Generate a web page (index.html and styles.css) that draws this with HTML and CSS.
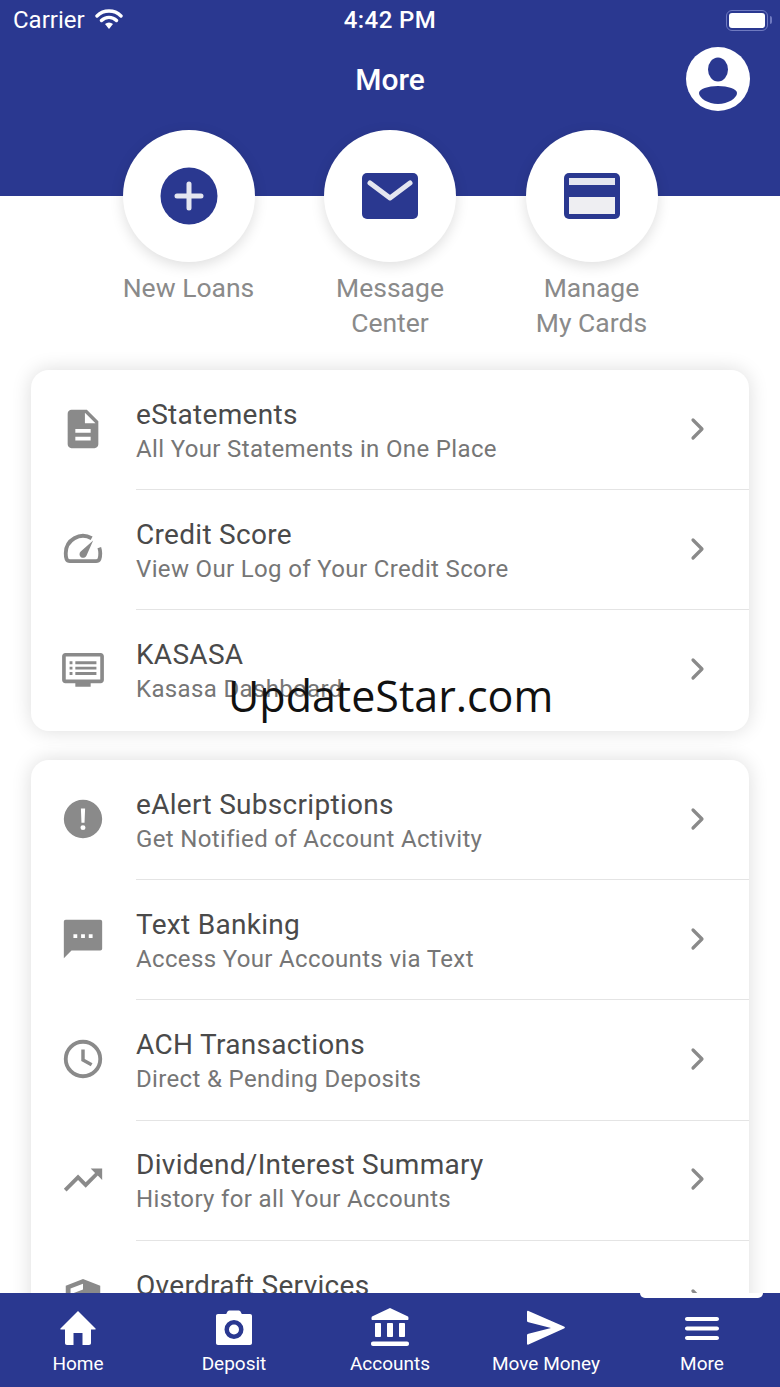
FILE: index.html
```html
<!DOCTYPE html>
<html lang="en">
<head>
    <meta charset="UTF-8">
    <meta name="viewport" content="width=device-width, initial-scale=1.0">
    <title>More</title>
    <link rel="stylesheet" href="styles.css">
</head>
<body>
    <div class="screen">
        <div class="content">
            <header class="top-bar">
                <div class="status-bar">
                    <div class="status-left">
                        <span>Carrier</span>
                        <svg class="wifi" viewBox="0 0 28 22">
                            <path d="M2 8a17 17 0 0 1 24 0M6.500 12.500a10.500 10.500 0 0 1 15 0" fill="none" stroke="#fff" stroke-width="3.400" stroke-linecap="round"/>
                            <path d="M10 16a6 6 0 0 1 8 0l-4 5z" fill="#fff"/>
                        </svg>
                    </div>
                    <span class="status-time">4:42 PM</span>
                    <div class="battery"><div class="battery-fill"></div></div>
                </div>
                <div class="title-row">
                    <h1>More</h1>
                    <svg class="profile" viewBox="0 0 64 64">
                        <circle cx="32" cy="32" r="32" fill="#fff"/>
                        <ellipse cx="32" cy="22.500" rx="10" ry="12" fill="#2a3890"/>
                        <path d="M32 39c10 0 19 3 19 7 0 5-9 11-19 11s-19-6-19-11c0-4 9-7 19-7z" fill="#2a3890"/>
                    </svg>
                </div>
            </header>

            <section class="actions">
                <div class="action">
                    <div class="action-circle">
                        <svg class="action-icon" viewBox="0 0 58 58">
                            <circle cx="29" cy="29" r="28.500" fill="#2a3890"/>
                            <path d="M29 17v24M17 29h24" stroke="#e4e6f0" stroke-width="5" stroke-linecap="round"/>
                        </svg>
                    </div>
                    <span class="action-label">New Loans</span>
                </div>
                <div class="action">
                    <div class="action-circle">
                        <svg class="action-icon" viewBox="0 0 58 50">
                            <rect x="1" y="2" width="56" height="46" rx="5" fill="#2a3890"/>
                            <path d="M9 12l20 15 20-15" fill="none" stroke="#e4e6f0" stroke-width="5" stroke-linecap="round" stroke-linejoin="round"/>
                        </svg>
                    </div>
                    <span class="action-label">Message<br>Center</span>
                </div>
                <div class="action">
                    <div class="action-circle">
                        <svg class="action-icon" viewBox="0 0 58 50">
                            <rect x="1" y="2" width="56" height="46" rx="5" fill="#2a3890"/>
                            <rect x="6" y="7" width="46" height="7" fill="#e4e6f0"/>
                            <rect x="6" y="26" width="46" height="17" fill="#eeeef2"/>
                        </svg>
                    </div>
                    <span class="action-label">Manage<br>My Cards</span>
                </div>
            </section>

            <section class="card">
                <a class="row">
                    <div class="row-icon">
                        <svg viewBox="0 0 24 24"><path d="M6 2h8l6 6v12c0 1.100-.9 2-2 2H6c-1.100 0-2-.9-2-2V4c0-1.100.9-2 2-2zm7 1.500V9h5.500L13 3.500zM8 12v2h8v-2H8zm0 4v2h8v-2H8z" fill-rule="evenodd"/></svg>
                    </div>
                    <div class="row-body">
                        <div class="row-text">
                            <div class="row-title">eStatements</div>
                            <div class="row-sub">All Your Statements in One Place</div>
                        </div>
                        <svg class="chevron" viewBox="0 0 16 24"><path d="M3 3l9 9-9 9"/></svg>
                    </div>
                </a>
                <a class="row">
                    <div class="row-icon">
                        <svg viewBox="0 0 24 24">
                            <path d="M16.500 6.400A9 9 0 0 0 3 14.200c0 1.500.1 2.300.4 3 .3.700.9 1.100 1.800 1.100h13.600c.9 0 1.500-.4 1.800-1.100.3-.7.4-1.500.4-3 0-1-.2-2-.5-2.900" fill="none" stroke="#8a8a8a" stroke-width="2"/>
                            <path d="M17.300 7.500l-3.500 8a1.900 1.900 0 1 1-3-2.200z"/>
                        </svg>
                    </div>
                    <div class="row-body">
                        <div class="row-text">
                            <div class="row-title">Credit Score</div>
                            <div class="row-sub">View Our Log of Your Credit Score</div>
                        </div>
                        <svg class="chevron" viewBox="0 0 16 24"><path d="M3 3l9 9-9 9"/></svg>
                    </div>
                </a>
                <a class="row">
                    <div class="row-icon">
                        <svg viewBox="0 0 24 24">
                            <path d="M2.800 3.600h18.400c1 0 1.700.7 1.700 1.700v12.400c0 1-.7 1.700-1.700 1.700H16v1.800H8v-1.800H2.800c-1 0-1.700-.7-1.700-1.700V5.300c0-1 .7-1.700 1.700-1.700zM3 5.500v12h18v-12H3z" fill-rule="evenodd"/>
                            <path d="M5 8h1.500v1.500H5zM8 8h11v1.500H8zM5 10.800h1.500v1.500H5zM8 10.800h11v1.500H8zM5 13.600h1.500v1.500H5zM8 13.600h11v1.500H8z"/>
                        </svg>
                    </div>
                    <div class="row-body">
                        <div class="row-text">
                            <div class="row-title">KASASA</div>
                            <div class="row-sub">Kasasa Dashboard</div>
                        </div>
                        <svg class="chevron" viewBox="0 0 16 24"><path d="M3 3l9 9-9 9"/></svg>
                    </div>
                </a>
            </section>

            <section class="card">
                <a class="row">
                    <div class="row-icon">
                        <svg viewBox="0 0 24 24"><path d="M12 2a10 10 0 1 0 0 20 10 10 0 0 0 0-20zm-1.100 4.500h2.200l-.3 7.500h-1.600l-.3-7.500zM12 15.200a1.300 1.300 0 1 1 0 2.600 1.300 1.300 0 0 1 0-2.600z" fill-rule="evenodd"/></svg>
                    </div>
                    <div class="row-body">
                        <div class="row-text">
                            <div class="row-title">eAlert Subscriptions</div>
                            <div class="row-sub">Get Notified of Account Activity</div>
                        </div>
                        <svg class="chevron" viewBox="0 0 16 24"><path d="M3 3l9 9-9 9"/></svg>
                    </div>
                </a>
                <a class="row">
                    <div class="row-icon">
                        <svg viewBox="0 0 24 24"><path d="M3 2h18c.6 0 1 .4 1 1v14c0 .6-.4 1-1 1H6l-4 4V3c0-.6.4-1 1-1zm4 7.500v2h2v-2H7zm4 0v2h2v-2h-2zm4 0v2h2v-2h-2z" fill-rule="evenodd"/></svg>
                    </div>
                    <div class="row-body">
                        <div class="row-text">
                            <div class="row-title">Text Banking</div>
                            <div class="row-sub">Access Your Accounts via Text</div>
                        </div>
                        <svg class="chevron" viewBox="0 0 16 24"><path d="M3 3l9 9-9 9"/></svg>
                    </div>
                </a>
                <a class="row">
                    <div class="row-icon">
                        <svg viewBox="0 0 24 24">
                            <circle cx="12" cy="12" r="9" fill="none" stroke="#8a8a8a" stroke-width="2"/>
                            <path d="M12 7v5.500l4.500 2.500" fill="none" stroke="#8a8a8a" stroke-width="1.800"/>
                        </svg>
                    </div>
                    <div class="row-body">
                        <div class="row-text">
                            <div class="row-title">ACH Transactions</div>
                            <div class="row-sub">Direct &amp; Pending Deposits</div>
                        </div>
                        <svg class="chevron" viewBox="0 0 16 24"><path d="M3 3l9 9-9 9"/></svg>
                    </div>
                </a>
                <a class="row">
                    <div class="row-icon">
                        <svg viewBox="0 0 24 24"><path d="M16 6l2.290 2.290-4.880 4.880-4-4L2 16.590 3.410 18l6-6 4 4 6.300-6.290L22 12V6z"/></svg>
                    </div>
                    <div class="row-body">
                        <div class="row-text">
                            <div class="row-title">Dividend/Interest Summary</div>
                            <div class="row-sub">History for all Your Accounts</div>
                        </div>
                        <svg class="chevron" viewBox="0 0 16 24"><path d="M3 3l9 9-9 9"/></svg>
                    </div>
                </a>
                <a class="row">
                    <div class="row-icon">
                        <svg viewBox="0 0 24 24"><path d="M12 1l9 3.500V12c0 5-4 9-9 10-5-1-9-5-9-10V4.500L12 1zm-6.500 5v3l6.500-2.500V3.500L5.500 6z" fill-rule="evenodd"/></svg>
                    </div>
                    <div class="row-body">
                        <div class="row-text">
                            <div class="row-title">Overdraft Services</div>
                            <div class="row-sub">&nbsp;</div>
                        </div>
                        <svg class="chevron" viewBox="0 0 16 24"><path d="M3 3l9 9-9 9"/></svg>
                    </div>
                </a>
            </section>
        </div>

        <nav class="tab-bar">
            <div class="tab-notch"></div>
            <div class="tab">
                <svg viewBox="0 0 40 36"><path d="M20 1L37.500 18.500c.4.500.1 1-.5 1H33v13.500c0 1-.7 2-2 2h-6.500V23h-9v12H9c-1.300 0-2-1-2-2V19.500H3c-.6 0-.9-.5-.5-1z"/></svg>
                <span>Home</span>
            </div>
            <div class="tab">
                <svg viewBox="0 0 40 36"><path d="M13 2.500C13.500 1 14.500.5 16 .5h8c1.500 0 2.500.5 3 2l.8 1.500H36c1.200 0 2 .8 2 2v27c0 1.200-.8 2-2 2H4c-1.200 0-2-.8-2-2V6c0-1.200.8-2 2-2h8.200zM20 10a9.500 9.500 0 1 0 0 19 9.500 9.500 0 0 0 0-19zm0 4.500a5 5 0 1 1 0 10 5 5 0 0 1 0-10z" fill-rule="evenodd"/></svg>
                <span>Deposit</span>
            </div>
            <div class="tab">
                <svg viewBox="0 0 40 40"><path d="M20 0l18 8.500c.5.300.5 2.500.5 2.500 0 .8-.5 1-1 1h-35c-.5 0-1-.2-1-1 0 0 0-2.200.5-2.500zM6 15h4c.5 0 1 .4 1 1v12c0 .6-.5 1-1 1H6c-.5 0-1-.4-1-1V16c0-.6.5-1 1-1zm12 0h4c.5 0 1 .4 1 1v12c0 .6-.5 1-1 1h-4c-.5 0-1-.4-1-1V16c0-.6.5-1 1-1zm12 0h4c.5 0 1 .4 1 1v12c0 .6-.5 1-1 1h-4c-.5 0-1-.4-1-1V16c0-.6.5-1 1-1zM3 33.500h34c1.200 0 2 .8 2 2.300s-.8 2.200-2 2.200H3c-1.200 0-2-.7-2-2.200s.8-2.300 2-2.300z"/></svg>
                <span>Accounts</span>
            </div>
            <div class="tab">
                <svg viewBox="0 0 40 36"><path d="M2.500 1L38 16.500c1.200.6 1.200 1.400 0 2L2.500 34.500C1.300 35 1 34.400 1 33.500v-8c0-1 .5-1.500 1.500-1.700L25 18 2.500 12.200C1.500 12 1 11.500 1 10.500v-8.500C1 1 1.500.6 2.500 1z"/></svg>
                <span>Move Money</span>
            </div>
            <div class="tab">
                <svg viewBox="0 0 40 36"><path d="M5 7h30c1.100 0 2 .9 2 2s-.9 2-2 2H5c-1.100 0-2-.9-2-2s.9-2 2-2zm0 9.500h30c1.100 0 2 .9 2 2s-.9 2-2 2H5c-1.100 0-2-.9-2-2s.9-2 2-2zm0 9.500h30c1.100 0 2 .9 2 2s-.9 2-2 2H5c-1.100 0-2-.9-2-2s.9-2 2-2z"/></svg>
                <span>More</span>
            </div>
        </nav>

        <div class="watermark">UpdateStar.com</div>
    </div>
</body>
</html>
```

FILE: styles.css
```css
:root {
    --blue: #2a3890;
    --icon-gray: #8a8a8a;
    --title-color: #4a4a4a;
    --sub-color: #767676;
    --line-color: #e4e4e4;
}

* {
    box-sizing: border-box;
}

body {
    margin: 0;
    background: #fff;
    font-family: Roboto, "Liberation Sans", sans-serif;
}

.screen {
    position: relative;
    width: 780px;
    height: 1387px;
    display: flex;
    flex-direction: column;
    overflow: hidden;
}

.content {
    flex: 1;
    min-height: 0;
    overflow: hidden;
}

/* header */
.top-bar {
    height: 196px;
    background: var(--blue);
    color: #fff;
}

.status-bar {
    height: 40px;
    display: flex;
    align-items: center;
    justify-content: space-between;
    padding: 0 12px 0 13px;
    font-size: 24px;
    position: relative;
}

.status-left {
    display: flex;
    align-items: center;
    gap: 10px;
}

.wifi {
    width: 28px;
    height: 22px;
    margin-bottom: 3px;
}

.status-time {
    position: absolute;
    left: 0;
    right: 0;
    text-align: center;
    font-weight: 500;
    letter-spacing: 0.4px;
}

.battery {
    position: relative;
    width: 42px;
    height: 21px;
    padding: 2px;
    border: 1.5px solid #6f7ac0;
    border-radius: 6px;
}

.battery::after {
    content: "";
    position: absolute;
    right: -5px;
    top: 5px;
    width: 2px;
    height: 8px;
    background: #6f7ac0;
    border-radius: 0 2px 2px 0;
}

.battery-fill {
    height: 100%;
    background: #fff;
    border-radius: 3px;
}

.title-row {
    height: 78px;
    padding-right: 30px;
    display: flex;
    align-items: center;
    justify-content: flex-end;
    position: relative;
}

.title-row h1 {
    position: absolute;
    left: 0;
    right: 0;
    margin: 0;
    text-align: center;
    font-size: 30px;
    font-weight: 500;
}

.profile {
    width: 64px;
    height: 64px;
}

/* quick actions */
.actions {
    margin-top: -66px;
    display: flex;
    justify-content: center;
    height: 240px;
}

.action {
    width: 201.5px;
    display: flex;
    flex-direction: column;
    align-items: center;
}

.action-circle {
    width: 132px;
    height: 132px;
    border-radius: 50%;
    background: #fff;
    box-shadow: 0 4px 14px rgba(0, 0, 0, 0.13);
    display: flex;
    align-items: center;
    justify-content: center;
}

.action-icon {
    width: 58px;
    height: 58px;
}

.action-label {
    margin-top: 8px;
    text-align: center;
    font-size: 26.5px;
    line-height: 35px;
    color: var(--icon-gray);
}

/* cards */
.card {
    margin: 0 31px 29.4px;
    background: #fff;
    border-radius: 18px;
    box-shadow: 0 0 20px rgba(0, 0, 0, 0.14);
}

.row {
    height: 120.2px;
    display: flex;
}

.row-icon {
    width: 105px;
    padding: 0 0 2px 29px;
    display: flex;
    align-items: center;
}

.row-icon svg {
    width: 46px;
    height: 46px;
    fill: var(--icon-gray);
}

.row-body {
    flex: 1;
    display: flex;
    align-items: center;
    justify-content: space-between;
    padding-right: 43px;
    border-bottom: 1px solid var(--line-color);
}

.row:last-child .row-body {
    border-bottom: none;
}

.row-text {
    margin-top: 4px;
}

.row-title {
    font-size: 28px;
    line-height: 35px;
    color: var(--title-color);
    letter-spacing: 0.3px;
}

.row-sub {
    font-size: 24px;
    line-height: 35px;
    color: var(--sub-color);
    letter-spacing: 0.35px;
}

.chevron {
    width: 16px;
    height: 24px;
    margin-bottom: 2px;
    fill: none;
    stroke: var(--icon-gray);
    stroke-width: 3.2;
    stroke-linecap: round;
    stroke-linejoin: round;
}

/* bottom tabs */
.tab-bar {
    position: relative;
    flex: none;
    height: 94px;
    background: var(--blue);
    display: flex;
}

.tab-notch {
    position: absolute;
    left: 640px;
    top: 0;
    width: 123px;
    height: 5px;
    background: #fff;
    border-radius: 0 0 5px 5px;
}

.tab {
    width: 156px;
    display: flex;
    flex-direction: column;
    align-items: center;
    color: #fff;
    font-size: 19px;
    padding-top: 15px;
}

.tab svg {
    width: 40px;
    height: 40px;
    fill: #fff;
}

.tab span {
    margin-top: 4px;
}

.watermark {
    position: absolute;
    left: 228px;
    top: 666px;
    font-family: "Open Sans", sans-serif;
    font-size: 43px;
    line-height: 60px;
    color: #111;
    white-space: nowrap;
}
```
